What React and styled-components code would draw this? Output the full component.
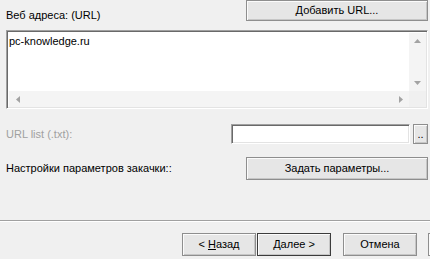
import styled, { createGlobalStyle } from "styled-components";

const GlobalStyle = createGlobalStyle`
  html, body {
    margin: 0;
    padding: 0;
    background: #f0f0f0;
  }
  body {
    font-family: "Liberation Sans", Arial, sans-serif;
    font-size: 11px;
    color: #000;
  }
`;

const Page = styled.div`
  width: 430px;
  height: 259px;
  overflow: hidden;
  background: #f0f0f0;
  display: flex;
  flex-direction: column;
`;

const Content = styled.div`
  padding: 0 2px 0 6px;
  display: flex;
  flex-direction: column;
`;

const Row = styled.div`
  display: flex;
  align-items: ${(p) => p.$align || "center"};
  margin-top: ${(p) => p.$top || 0}px;
  height: ${(p) => p.$height}px;
`;

const Label = styled.div`
  line-height: 13px;
  color: ${(p) => (p.$disabled ? "#a0a0a0" : "#000")};
  padding-top: ${(p) => p.$pad || 0}px;
  white-space: nowrap;
`;

const Button = styled.button`
  font-family: inherit;
  font-size: 11px;
  color: #000;
  width: ${(p) => p.$width}px;
  height: ${(p) => p.$height || 23}px;
  margin-left: ${(p) => (p.$auto ? "auto" : `${p.$gap || 0}px`)};
  flex-shrink: 0;
  padding: 0;
  background: #e6e6e6;
  border: 1px solid ${(p) => (p.$default ? "#3c3c3c" : "#8e8e8e")};
  box-shadow: inset 1px 1px #fbfbfb, inset -1px -1px #c6c6c6
    ${(p) => (p.$default ? ", inset 0 0 0 1px #707070" : "")};
  line-height: 1;
  cursor: default;
  u {
    text-decoration: underline;
    text-underline-offset: 1px;
  }
`;

const Sunken = styled.div`
  box-sizing: border-box;
  background: #fff;
  border-style: solid;
  border-width: 1px;
  border-color: #a0a0a0 #ffffff #ffffff #a0a0a0;
  box-shadow: inset 1px 1px #696969, inset -1px -1px #e3e3e3;
`;

const ListBox = styled(Sunken)`
  margin-top: 9px;
  height: 79px;
  display: grid;
  grid-template-columns: 1fr 17px;
  grid-template-rows: 1fr 16px;
  padding: 2px 1px 1px 2px;
`;

const ListText = styled.div`
  padding: 2px 0 0 0;
  line-height: 13px;
`;

const ScrollBar = styled.div`
  background: #f4f4f4;
  display: flex;
  flex-direction: ${(p) => (p.$vertical ? "column" : "row")};
  justify-content: space-between;
  align-items: center;
`;

const Corner = styled.div`
  background: #f0f0f0;
`;

const ArrowBox = styled.div`
  width: 17px;
  height: 16px;
  display: flex;
  align-items: center;
  justify-content: center;
`;

const Arrow = ({ dir }) => {
  const pts = {
    up: "0,4 3.5,0 7,4",
    down: "0,0 3.5,4 7,0",
    left: "4,0 0,3.5 4,7",
    right: "0,0 4,3.5 0,7",
  }[dir];
  const horiz = dir === "left" || dir === "right";
  return (
    <svg width={horiz ? 4 : 7} height={horiz ? 7 : 4} viewBox={horiz ? "0 0 4 7" : "0 0 7 4"}>
      <polygon points={pts} fill="#a3a3a3" />
    </svg>
  );
};

const TextInput = styled(Sunken)`
  margin-left: auto;
  width: 179px;
  height: 20px;
`;

const Separator = styled.div`
  margin-top: 40px;
  height: 1px;
  background: #a0a0a0;
  border-bottom: 1px solid #ffffff;
`;

const Footer = styled.div`
  display: flex;
  padding-left: 182px;
  margin-top: 11px;
`;

export default function App() {
  return (
    <>
      <GlobalStyle />
      <Page>
        <Content>
          <Row $height={21} $align="flex-start">
            <Label $pad={9}>Веб адреса: (URL)</Label>
            <Button $auto $width={182} $height={21}>Добавить URL...</Button>
          </Row>
          <ListBox>
            <ListText>pc-knowledge.ru</ListText>
            <ScrollBar $vertical>
              <ArrowBox><Arrow dir="up" /></ArrowBox>
              <ArrowBox><Arrow dir="down" /></ArrowBox>
            </ScrollBar>
            <ScrollBar>
              <ArrowBox><Arrow dir="left" /></ArrowBox>
              <ArrowBox><Arrow dir="right" /></ArrowBox>
            </ScrollBar>
            <Corner />
          </ListBox>
          <Row $top={15} $height={20}>
            <Label $disabled>URL list (.txt):</Label>
            <TextInput />
            <Button $gap={3} $width={15} $height={20}>..</Button>
          </Row>
          <Row $top={13} $height={23}>
            <Label>Настройки параметров закачки::</Label>
            <Button $auto $width={182}>Задать параметры...</Button>
          </Row>
        </Content>
        <Separator />
        <Footer>
          <Button $width={74}>&lt; <u>Н</u>азад</Button>
          <Button $gap={1} $width={74} $default><u>Д</u>алее &gt;</Button>
          <Button $gap={12} $width={74}>Отмена</Button>
          <Button $gap={11} $width={74} aria-label="Справка" />
        </Footer>
      </Page>
    </>
  );
}
